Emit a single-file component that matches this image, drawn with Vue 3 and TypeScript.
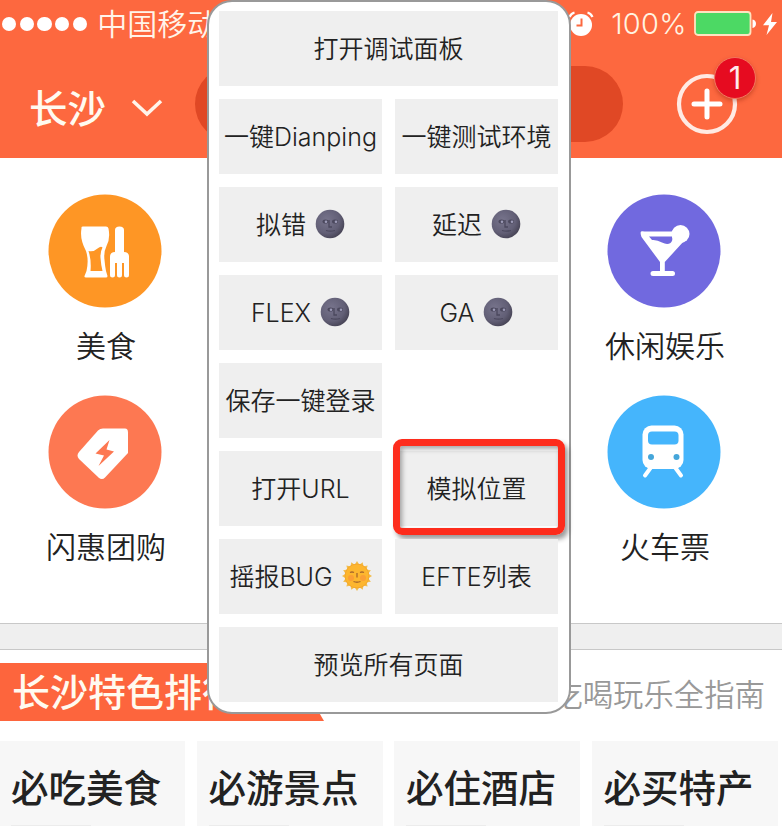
<script setup lang="ts">
interface DebugItem {
  label: string
  face?: 'moon' | 'sun'
  wide?: boolean
  empty?: boolean
  marked?: boolean
}

const signal: number[] = [1, 2, 3, 4, 5]

const debugItems: DebugItem[] = [
  { label: '打开调试面板', wide: true },
  { label: '一键Dianping' },
  { label: '一键测试环境' },
  { label: '拟错', face: 'moon' },
  { label: '延迟', face: 'moon' },
  { label: 'FLEX', face: 'moon' },
  { label: 'GA', face: 'moon' },
  { label: '保存一键登录' },
  { label: '', empty: true },
  { label: '打开URL' },
  { label: '模拟位置', marked: true },
  { label: '摇报BUG', face: 'sun' },
  { label: 'EFTE列表' },
  { label: '预览所有页面', wide: true },
]

const cards: string[] = ['必吃美食', '必游景点', '必住酒店', '必买特产']
const rays: number[] = Array.from({ length: 16 }, (_, i) => i * 22.5)
</script>

<template>
  <main class="screen">
    <header class="top">
      <div class="status">
        <div class="signal"><i v-for="s in signal" :key="s" class="dot"></i></div>
        <span class="carrier">中国移动</span>
        <svg class="alarm" width="28" height="28" viewBox="0 0 28 28">
          <circle cx="14" cy="15" r="11" fill="#fff" />
          <path d="M2.5 7 Q4 3.500 7.500 2.500M20.500 2.500Q24 3.500 25.500 7" stroke="#fff" stroke-width="2.200" fill="none" />
          <path d="M14.500 8.500V15.500H9.500" stroke="#fc683f" stroke-width="2" fill="none" />
        </svg>
        <span class="percent">100%</span>
        <svg class="battery" width="64" height="26" viewBox="0 0 64 26">
          <rect x="1" y="1" width="55.500" height="23" rx="3" fill="#4cd964" stroke="#ffe3c0" stroke-width="1.800" />
          <path d="M58.500 8.500q3.500 .8 3.500 4.200t-3.500 4.200z" fill="#fff" />
        </svg>
        <svg class="bolt" width="16" height="24" viewBox="0 0 16 24">
          <path d="M10.500 1L1 13.200h6L4.500 23L15 10H9z" fill="#fff" />
        </svg>
      </div>
      <div class="nav">
        <span class="city">长沙</span>
        <svg class="chevron" width="32" height="20" viewBox="0 0 32 20">
          <path d="M2 3L16 16L30 3" stroke="#fff4ea" stroke-width="3.600" fill="none" />
        </svg>
        <div class="search"></div>
        <div class="add">
          <svg width="62" height="62" viewBox="0 0 62 62">
            <circle cx="31" cy="31" r="28" fill="none" stroke="#ffeae3" stroke-width="4.200" />
            <path d="M31 18V44M18 31H44" stroke="#fff" stroke-width="5" stroke-linecap="round" />
          </svg>
          <span class="badge">1</span>
        </div>
      </div>
    </header>

    <section class="categories">
      <div class="category">
        <svg class="disc" viewBox="0 0 114 114">
          <circle cx="57" cy="57" r="56.500" fill="#fe9625" />
          <path d="M33.500 34.500Q33 32.500 35 32.500H58Q60 32.500 60.500 34.500Q62.500 45 58.500 52Q55.500 58 56.500 66Q57 72 58 77L59.500 82Q59.500 83.500 58 83.500H38Q36 83.500 36.500 82L38.500 77Q41 66 38 57Q31.500 45 33.500 34.500Z" fill="#fff" />
          <path d="M40.500 57Q46 58 49.500 54.500Q53 51.500 54.500 53.500Q52 58 52.500 64Q53 71 54.500 77H42.500Q43.500 66 40.500 57Z" fill="#fe9625" />
          <path d="M67 58V36Q67 32.500 71.500 32.500Q76 32.500 76 36V58Q80.500 58 81 62V81Q81 83.500 78.500 83.500Q76 83.500 76 81V69H74V81Q74 83.500 71.500 83.500Q69 83.500 69 81V69H67V81Q67 83.500 64.500 83.500Q62 83.500 62 81V63Q62 58 67 58Z" fill="#fff" />
        </svg>
        <span class="caption">美食</span>
      </div>
      <div class="category">
        <svg class="disc" viewBox="0 0 114 114">
          <circle cx="57" cy="57" r="56.500" fill="#7169df" />
          <path d="M34 37.500Q35 37 37.500 37.500H76L77 47L57.800 68V77H65.500Q68 77 68 79.500Q68 82 65.500 82H46Q43.500 82 43.500 79.500Q43.500 77 46 77H53V68L34.500 43Q33 39 34 37.500Z" fill="#fff" />
          <path d="M42 42.500H65Q66 47 63.500 49Q60 51 55 48.500Q50 45.500 45 46Z" fill="#7169df" />
          <circle cx="73.500" cy="40" r="9" fill="#fff" />
        </svg>
        <span class="caption">休闲娱乐</span>
      </div>
      <div class="category">
        <svg class="disc" viewBox="0 0 114 114">
          <circle cx="57" cy="57" r="56.500" fill="#fd7852" />
          <path d="M55 33.500H77Q80 33.500 80 37.500V58L57 82.500Q54 85.500 50.500 82.500L31 64Q28 60.500 31 57L50 35.500Q52 33.500 55 33.500Z" fill="#fff" />
          <path d="M61.500 45L47.500 58.500L56 60.500L50.500 71L66 56.500L58.500 54.500Z" fill="#fd7852" />
        </svg>
        <span class="caption">闪惠团购</span>
      </div>
      <div class="category">
        <svg class="disc" viewBox="0 0 114 114">
          <circle cx="57" cy="57" r="56.500" fill="#45b5fc" />
          <rect x="35.500" y="30.500" width="41" height="43.500" rx="9" fill="#fff" />
          <rect x="41" y="36.500" width="30.500" height="13" rx="4" fill="#45b5fc" />
          <circle cx="44" cy="62" r="3" fill="#45a6da" />
          <circle cx="69.500" cy="62" r="3" fill="#45a6da" />
          <path d="M43.500 73L38 80.500M68.500 73L74 80.500" stroke="#fff" stroke-width="4" stroke-linecap="round" />
        </svg>
        <span class="caption">火车票</span>
      </div>
    </section>

    <div class="divider"></div>

    <section class="guide">
      <div class="guide-head">
        <h2 class="ribbon">长沙特色排行榜</h2>
        <span class="more">吃喝玩乐全指南</span>
      </div>
      <div class="cards">
        <article v-for="card in cards" :key="card" class="card">
          <span>{{ card }}</span>
          <i class="card-line"></i>
        </article>
      </div>
    </section>

    <div class="dialog">
      <div
        v-for="(item, index) in debugItems"
        :key="index"
        class="cell"
        :class="{ wide: item.wide, empty: item.empty, marked: item.marked }"
      >
        <span>{{ item.label }}</span>
        <svg v-if="item.face === 'moon'" class="face" viewBox="0 0 30 30">
          <defs>
            <radialGradient id="moon" cx=".38" cy=".36" r=".7">
              <stop offset="0" stop-color="#77748c" />
              <stop offset=".65" stop-color="#625f76" />
              <stop offset="1" stop-color="#444152" />
            </radialGradient>
          </defs>
          <circle cx="15" cy="15" r="14.300" fill="url(#moon)" />
          <ellipse cx="10.500" cy="12.500" rx="3" ry="2" fill="#4b485d" />
          <ellipse cx="20" cy="12.500" rx="3" ry="2" fill="#4b485d" />
          <circle cx="11" cy="12.800" r="1.300" fill="#9d9bb8" />
          <circle cx="21" cy="12.800" r="1.300" fill="#9d9bb8" />
          <path d="M14 11V18H17M11 21.500Q15.500 22.800 20 21.500" stroke="#4b485d" stroke-width="1.300" fill="none" />
        </svg>
        <svg v-if="item.face === 'sun'" class="face" viewBox="0 0 30 30">
          <path v-for="ray in rays" :key="ray" d="M12.500 4L15 0L17.500 4Z" fill="#f2bd4c" :transform="`rotate(${ray} 15 15)`" />
          <circle cx="15" cy="15" r="12" fill="#fdb62e" stroke="#f3a22a" stroke-width=".8" />
          <circle cx="9" cy="17" r="3" fill="#fb9f35" />
          <circle cx="21" cy="17" r="3" fill="#fb9f35" />
          <path d="M8 11.500Q10 10.500 12 11.500M18 11.500Q20 10.500 22 11.500M15 12V16.500M11.500 20.500Q15 22 18.500 20.500" stroke="#a8692c" stroke-width="1.300" fill="none" />
        </svg>
      </div>
    </div>
  </main>
</template>

<style>
body {
  background: #fff;
  overflow: hidden;
}
</style>

<style scoped>
.screen {
  position: relative;
  width: 782px;
  height: 826px;
  overflow: hidden;
  background: #fff;
  color: #222;
  font-family: Inter, "Noto Sans CJK SC", sans-serif;
  white-space: nowrap;
}
.top {
  height: 158px;
  background: #fd683f;
  color: #fff;
}
.status {
  display: flex;
  align-items: center;
  height: 48px;
  padding-left: 2px;
  font-size: 30px;
  line-height: 48px;
  font-weight: 350;
}
.signal {
  display: flex;
  gap: 3.300px;
}
.dot {
  width: 14.400px;
  height: 14.400px;
  border-radius: 50%;
  background: #fff;
}
.carrier {
  margin-left: 10px;
  color: #fff4ea;
}
.alarm {
  margin-left: 350px;
}
.percent {
  width: 76px;
  margin-left: 16px;
  font-size: 29px;
  letter-spacing: 0.3px;
  color: #fff4e2;
}
.battery {
  margin-left: 7px;
}
.bolt {
  margin-left: 4px;
}
.nav {
  display: flex;
  align-items: center;
  height: 111px;
  padding-left: 29px;
}
.city {
  font-size: 38.500px;
  line-height: 54px;
  font-weight: 500;
  color: #fffaf0;
  margin-top: 10px;
}
.chevron {
  margin-left: 25px;
  margin-top: 8px;
}
.search {
  width: 428px;
  height: 76px;
  margin-left: 32px;
  border-radius: 38px;
  background: #e04825;
}
.add {
  position: relative;
  width: 62px;
  height: 62px;
  margin-left: 53px;
}
.add svg {
  display: block;
}
.badge {
  position: absolute;
  left: 38px;
  top: -16px;
  width: 42px;
  height: 42px;
  border: 1.500px solid #f4775e;
  border-radius: 50%;
  background: #e60b20;
  box-shadow: 0 2px 4px rgba(120, 20, 0, 0.35);
  text-align: center;
  font: 400 31px/40px Inter, sans-serif;
  color: #ffe9ec;
  box-sizing: border-box;
}
.categories {
  display: grid;
  grid-template-columns: 212px 234px;
  grid-auto-rows: 201px;
  justify-content: space-between;
  height: 465px;
  padding-top: 35.500px;
  box-sizing: border-box;
}
.category {
  display: flex;
  flex-direction: column;
  align-items: center;
}
.disc {
  width: 114px;
  height: 114px;
  margin-right: 2px;
}
.caption {
  margin-top: 16px;
  font-size: 30px;
  line-height: 44px;
  font-weight: 350;
}
.divider {
  height: 27px;
  box-sizing: border-box;
  border-top: 1.500px solid #c8c8c8;
  border-bottom: 1.500px solid #c8c8c8;
  background: #efefef;
}
.guide {
  padding-top: 13px;
}
.guide-head {
  display: flex;
  justify-content: space-between;
  height: 58px;
  padding-right: 17px;
}
.ribbon {
  width: 324px;
  margin: 0;
  padding-left: 12px;
  box-sizing: border-box;
  background: #fd653d;
  clip-path: polygon(0 0, 290px 0, 100% 100%, 0 100%);
  color: #fffaf0;
  font-size: 38px;
  line-height: 59px;
  font-weight: 500;
}
.more {
  font-size: 30.400px;
  line-height: 64px;
  font-weight: 350;
  color: #999;
}
.cards {
  display: grid;
  grid-template-columns: repeat(4, 186px);
  column-gap: 11.500px;
  margin-top: 20px;
  margin-left: -1px;
}
.card {
  display: flex;
  flex-direction: column;
  height: 85px;
  padding-left: 12px;
  box-sizing: border-box;
  background: #f7f7f7;
  font-size: 37.500px;
  font-weight: 500;
}
.card span {
  height: 84px;
  line-height: 96px;
}
.card-line {
  flex: none;
  width: 80px;
  height: 2px;
  background: #ececec;
}
.dialog {
  position: absolute;
  left: 206.500px;
  top: 0;
  width: 364px;
  height: 714px;
  display: grid;
  grid-template-columns: 163px 163px;
  grid-auto-rows: 75px;
  gap: 13px;
  align-content: start;
  padding: 9px 10px 0 10.500px;
  box-sizing: border-box;
  border: 2px solid #999;
  border-radius: 25px;
  background: #fff;
}
.cell {
  position: relative;
  display: flex;
  align-items: center;
  justify-content: center;
  gap: 9px;
  background: #efefef;
  font-size: 25px;
  line-height: 36px;
  font-weight: 350;
}
.wide {
  grid-column: span 2;
}
.empty {
  background: none;
}
.face {
  width: 30px;
  height: 30px;
  margin-bottom: 2px;
}
.marked::after {
  content: "";
  position: absolute;
  left: -2px;
  top: -12px;
  width: 172px;
  height: 96px;
  box-sizing: border-box;
  border: 7px solid #fd2c1c;
  border-radius: 9px;
  box-shadow: 3px 4px 5px rgba(0, 0, 0, 0.4), inset 2px 3px 5px rgba(0, 0, 0, 0.35);
}
</style>
